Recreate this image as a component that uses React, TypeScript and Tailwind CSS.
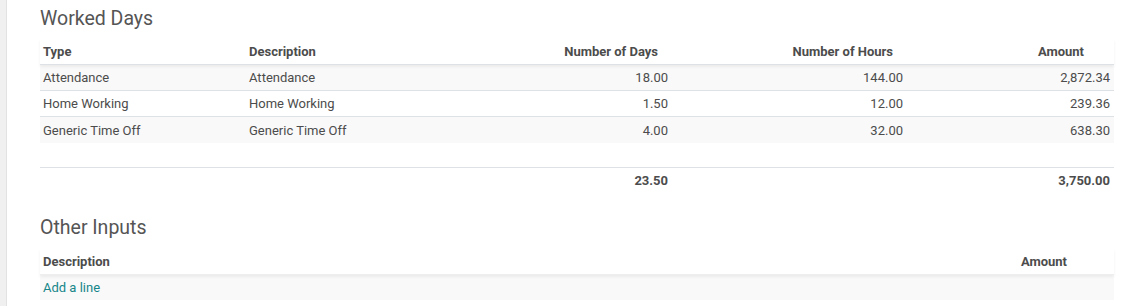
import React from "react";

const rows = [
  ["Attendance", "Attendance", "18.00", "144.00", "2,872.34"],
  ["Home Working", "Home Working", "1.50", "12.00", "239.36"],
  ["Generic Time Off", "Generic Time Off", "4.00", "32.00", "638.30"],
];

export default function App() {
  return (
    <div
      className="flex w-[1144px] h-[306px] overflow-hidden bg-white text-[13px] leading-[18px] text-[#4c4c4c]"
      style={{ fontFamily: "Roboto, 'Noto Sans', sans-serif" }}
    >
      <div className="w-[7px] shrink-0 bg-[#f0f0f0] border-r border-[#e2e2e2]" />
      <div className="flex-1 pl-[33px] pr-[30px]">
        {/* Worked Days */}
        <div className="pt-[7px] text-[19.5px] leading-[24px] text-[#555]">Worked Days</div>
        <div className="mt-[8px]">
          <div className="flex h-[26px] items-center font-bold border-b border-[#dee2e6] shadow-[0_2px_3px_rgba(0,0,0,0.06)] relative">
            <div className="w-[206px] pl-[3px]">Type</div>
            <div className="w-[234px] pl-[3px]">Description</div>
            <div className="w-[192px] pr-[14px] text-right">Number of Days</div>
            <div className="w-[235px] pr-[14px] text-right">Number of Hours</div>
            <div className="flex-1 pr-[30px] text-right">Amount</div>
          </div>
          {rows.map((r, i) => (
            <div
              key={i}
              className={`flex h-[26px] items-center pt-[1px] ${i < 2 ? "border-b border-[#dee2e6]" : ""} ${i % 2 === 0 ? "bg-[#f9f9f9]" : "bg-white"}`}
            >
              <div className="w-[206px] pl-[3px]">{r[0]}</div>
              <div className="w-[234px] pl-[3px]">{r[1]}</div>
              <div className="w-[192px] pr-[4px] text-right">{r[2]}</div>
              <div className="w-[235px] pr-[4px] text-right">{r[3]}</div>
              <div className="flex-1 pr-[4px] text-right">{r[4]}</div>
            </div>
          ))}
          <div className="h-[24px]" />
          <div className="flex h-[27px] items-center font-bold border-t border-[#dee2e6]">
            <div className="w-[206px]" />
            <div className="w-[234px]" />
            <div className="w-[192px] pr-[4px] text-right">23.50</div>
            <div className="w-[235px]" />
            <div className="flex-1 pr-[4px] text-right">3,750.00</div>
          </div>
        </div>

        {/* Other Inputs */}
        <div className="mt-[22px] text-[19.5px] leading-[24px] text-[#555]">Other Inputs</div>
        <div className="mt-[9px]">
          <div className="flex h-[26px] items-center font-bold border-b border-[#eeeeee] shadow-[0_2px_3px_rgba(0,0,0,0.06)] relative">
            <div className="flex-1 pl-[3px]">Description</div>
            <div className="w-[200px] pr-[47px] text-right">Amount</div>
          </div>
          <div className="flex h-[25px] items-center bg-[#f9f9f9]">
            <div className="pl-[3px] text-[#17868a]">Add a line</div>
          </div>
        </div>
      </div>
    </div>
  );
}
